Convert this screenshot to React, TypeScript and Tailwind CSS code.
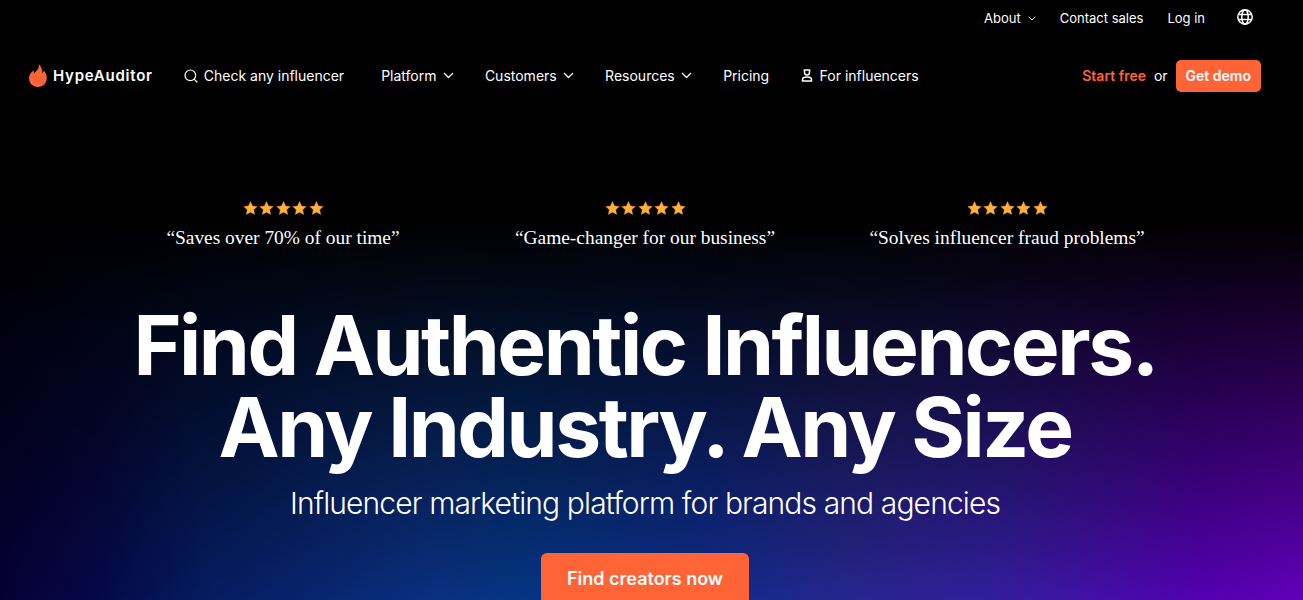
import { Search } from "lucide-react"

const quotes = [
  "“Saves over 70% of our time”",
  "“Game-changer for our business”",
  "“Solves influencer fraud problems”",
]

const Flame = () => (
  <svg width="18" height="23" viewBox="0 0 19 23" fill="#ff6436" preserveAspectRatio="none">
    <path d="M10.2 0c.7 2.400-.1 4.300-1.500 5.900C7.500 7.300 6.400 8 5.800 9.500 5.300 8.600 5 7.700 5 6.500 2 8.300 0 11 0 14.200 0 19.100 4 23 9.300 23c5.500 0 9.500-3.900 9.500-9 0-3.200-1.500-5.500-3.100-7.500-.2 1.200-.7 2.100-1.500 2.800C14.300 5.300 12.700 2.100 10.200 0Z" />
  </svg>
)

const Person = () => (
  <svg width="12" height="13" viewBox="0 0 12 13" fill="none" stroke="white" strokeWidth="1.5">
    <path d="M2.500 1h7M3.500 1v2.500a2.500 2.500 0 0 0 5 0V1" />
    <path d="M1.500 12v-1.500c0-1.500 1.500-2.500 4.500-2.500s4.500 1 4.500 2.500V12h-9Z" />
  </svg>
)

const Chevron = ({ w }: { w: number }) => (
  <svg width={w} height={w * 0.6} viewBox="0 0 11 6.600" fill="none" stroke="white" strokeWidth="1.300">
    <path d="M1 1l4.500 4.500L10 1" />
  </svg>
)

const GlobeIcon = () => (
  <svg width="16" height="16" viewBox="0 0 16 16" fill="none" stroke="white" strokeWidth="1.500">
    <circle cx="8" cy="8" r="7.200" />
    <ellipse cx="8" cy="8" rx="3.200" ry="7.200" />
    <path d="M1.500 5.500h13M1.500 10.500h13" />
  </svg>
)

const Stars = () => (
  <div className="flex gap-[1.5px]">
    {[0, 1, 2, 3, 4].map((i) => (
      <svg key={i} width="15" height="14" viewBox="0 0 24 23" fill="#ffb33f" stroke="#f08a20" strokeWidth="0.8">
        <path d="M12 1l3.300 7.200 7.700.9-5.700 5.300 1.500 7.700L12 18.300l-6.800 3.800 1.500-7.700L1 9.100l7.700-.9L12 1Z" />
      </svg>
    ))}
  </div>
)

const NavItem = ({ label }: { label: string }) => (
  <div className="flex items-center gap-[6px]">
    <span>{label}</span>
    <Chevron w={11} />
  </div>
)

export default function App() {
  return (
    <div className="h-[600px] w-[1303px] overflow-hidden bg-[linear-gradient(to_bottom,#000000_220px,#00000000_640px),linear-gradient(to_right,#06003a_0px,#050a50_100px,#051e68_200px,#0b358e_434px,#053a91_520px,#10309a_700px,#2a2a9c_850px,#3820ad_1000px,#5c00c3_1200px,#6a00cc_1303px)] font-['Inter',sans-serif] text-white">
      <div className="w-[1288px]">
        <header className="pr-[27px] pl-[28px] text-sm">
          <div className="flex h-[36px] items-center justify-end gap-[24px] pr-[8px] text-[13px]">
            <div className="flex items-center gap-[7px]">
              <span>About</span>
              <Chevron w={8} />
            </div>
            <span>Contact sales</span>
            <span>Log in</span>
            <div className="-mt-[2px] ml-[8px]">
              <GlobeIcon />
            </div>
          </div>
          <nav className="flex h-[80px] items-center pb-[1px]">
            <div className="flex items-center gap-[6px] pl-[1px]">
              <Flame />
              <span className="text-[15px] font-semibold tracking-[0.75px]">HypeAuditor</span>
            </div>
            <div className="ml-[30px] flex items-center gap-[5px]">
              <Search size={16} strokeWidth={1.8} />
              <span>Check any influencer</span>
            </div>
            <div className="ml-[37px] flex items-center gap-[31.4px]">
              <NavItem label="Platform" />
              <NavItem label="Customers" />
              <NavItem label="Resources" />
              <span>Pricing</span>
              <div className="flex items-center gap-[7px]">
                <Person />
                <span>For influencers</span>
              </div>
            </div>
            <div className="ml-auto flex items-center gap-[8px]">
              <span className="font-semibold text-[#ff6436]">Start free</span>
              <span>or</span>
              <button className="h-[32px] rounded-[5px] bg-[#ff6436] px-[10px] font-semibold">Get demo</button>
            </div>
          </nav>
        </header>

        <main className="flex flex-col items-center pl-[2px]">
          <div className="mt-[85px] grid w-[1086px] grid-cols-3">
            {quotes.map((q) => (
              <div key={q} className="flex flex-col items-center">
                <Stars />
                <p className="mt-[11px] whitespace-nowrap font-['Liberation_Serif',serif] text-[19.4px] leading-[24px]">{q}</p>
              </div>
            ))}
          </div>
          <h1 className="mt-[55px] text-center text-[82px] leading-[82px] font-bold tracking-[-2.46px]">
            Find Authentic Influencers.
            <br />
            Any Industry. Any Size
          </h1>
          <p className="mt-[12px] text-[30px] leading-[44px] font-light tracking-[-0.88px]">
            Influencer marketing platform for brands and agencies
          </p>
          <button className="mt-[28px] h-[52px] w-[208px] shrink-0 rounded-[6px] bg-[#ff6436] text-lg font-semibold">
            Find creators now
          </button>
        </main>
      </div>
    </div>
  )
}
